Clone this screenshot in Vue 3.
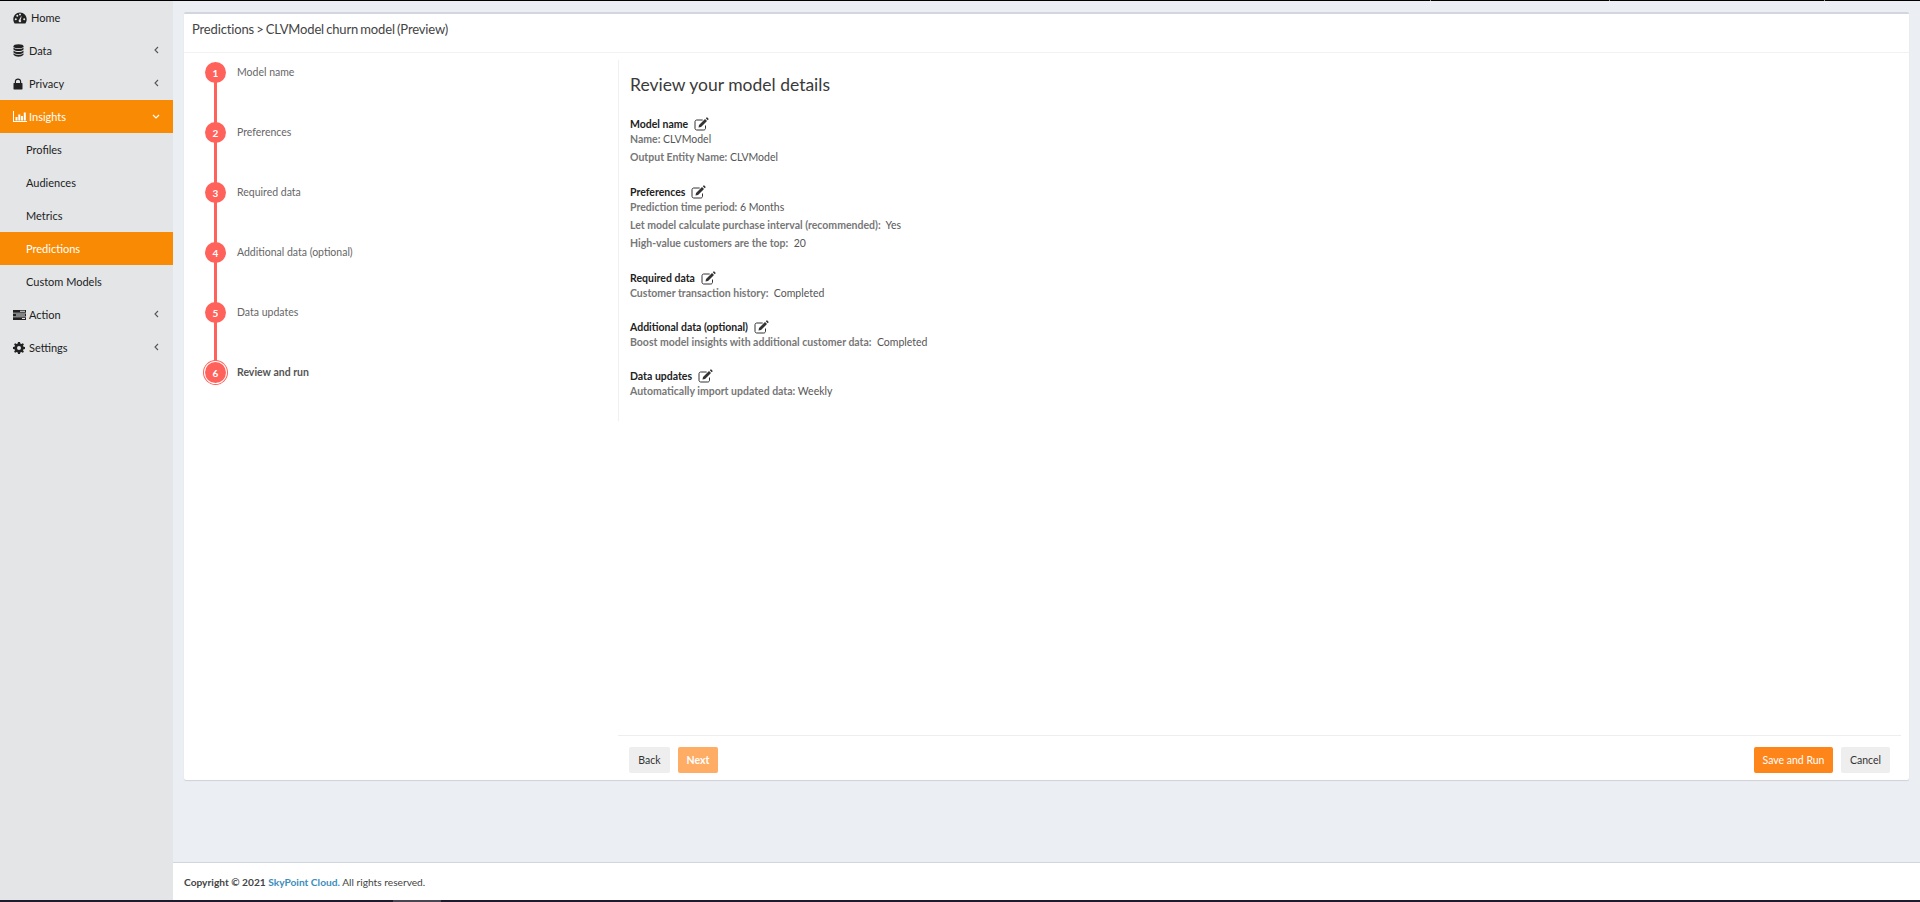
<script setup>
const nav = [
  { label: 'Home', icon: 'home' },
  { label: 'Data', icon: 'data', caret: true },
  { label: 'Privacy', icon: 'lock', caret: true },
  { label: 'Insights', icon: 'chart', caret: true, open: true },
  { label: 'Profiles', sub: true },
  { label: 'Audiences', sub: true },
  { label: 'Metrics', sub: true },
  { label: 'Predictions', sub: true, active: true },
  { label: 'Custom Models', sub: true },
  { label: 'Action', icon: 'action', caret: true },
  { label: 'Settings', icon: 'cog', caret: true }
]
const steps = ['Model name', 'Preferences', 'Required data', 'Additional data (optional)', 'Data updates', 'Review and run']
const sections = [
  { title: 'Model name', rows: [['Name:', 'CLVModel'], ['Output Entity Name:', 'CLVModel']] },
  { title: 'Preferences', rows: [['Prediction time period:', '6 Months'], ['Let model calculate purchase interval (recommended):', '\u00a0Yes'], ['High-value customers are the top:', '\u00a020']] },
  { title: 'Required data', rows: [['Customer transaction history:', '\u00a0Completed']] },
  { title: 'Additional data (optional)', rows: [['Boost model insights with additional customer data:', '\u00a0Completed']] },
  { title: 'Data updates', rows: [['Automatically import updated data:', 'Weekly']] }
]
</script>

<template>
  <div class="page">
    <div class="topline"><i class="t1"></i><i class="t2"></i><i class="t3"></i></div>
    <div class="shell">
      <aside class="side">
        <div v-for="n in nav" :key="n.label" class="nav" :class="{ sub: n.sub, on: n.open || n.active, home: n.icon === 'home' }">
          <span v-if="n.icon" class="ico">
            <svg v-if="n.icon === 'home'" viewBox="0 0 14 12" width="14" height="12"><path fill="#222" fill-rule="evenodd" d="M7 0.5C3.2.5.3 3.500.3 7.300c0 1.600.5 3 1.300 4.200h10.800c.8-1.200 1.300-2.600 1.300-4.200C13.700 3.500 10.800.5 7 .5zM2.800 8.200a1 1 0 1 1 0-2 1 1 0 0 1 0 2zM4.300 4.800a1 1 0 1 1 0-2 1 1 0 0 1 0 2zM7 3.500a1 1 0 1 1 0-2 1 1 0 0 1 0 2zM8.200 8.700a1.300 1.300 0 1 1-2-.9l1.900-3.500.5.200-1 3.700c.4.100.6.300.6.500zM11.200 8.200a1 1 0 1 1 0-2 1 1 0 0 1 0 2z"/></svg>
            <svg v-else-if="n.icon === 'data'" viewBox="0 0 11 13" width="11" height="13"><ellipse cx="5.500" cy="2.200" rx="5" ry="2" fill="#222"/><path fill="#222" d="M.5 3.600c1 1 3 1.500 5 1.500s4-.5 5-1.500v2c-1 1-3 1.500-5 1.500s-4-.5-5-1.500zM.5 6.600c1 1 3 1.500 5 1.500s4-.5 5-1.500v2c-1 1-3 1.500-5 1.500s-4-.5-5-1.500zM.5 9.300c1 1 3 1.500 5 1.500s4-.5 5-1.500v1.500c-1 1.300-3 1.900-5 1.900s-4-.6-5-1.900z"/></svg>
            <svg v-else-if="n.icon === 'lock'" viewBox="0 0 10 12" width="10" height="12"><path fill="#222" d="M1 5h.8V3.600C1.800 1.700 3.200.5 5 .5s3.200 1.200 3.200 3.100V5H9c.3 0 .5.200.5.500v5.500c0 .3-.2.500-.5.500H1c-.3 0-.5-.2-.5-.5V5.500C.5 5.200.7 5 1 5zm2-.1h4V3.600C7 2.500 6.100 1.800 5 1.800s-2 .7-2 1.800z"/></svg>
            <svg v-else-if="n.icon === 'chart'" viewBox="0 0 14 11" width="14" height="11"><path fill="#fff" d="M0 0h1v10h13v1H0zM2.500 6h2v3.500h-2zM5.300 3.500h2v6h-2zM8 5h2v4.500H8zM10.800 1.500h2v8h-2z"/></svg>
            <svg v-else-if="n.icon === 'action'" viewBox="0 0 13 10" width="13" height="10"><path fill="#222" d="M0 0h13v2.800H0zM0 3.600h13v2.800H0zM0 7.200h13V10H0z"/><path fill="#e4e5e7" d="M7 .8h5v1H7zM3 4.400h9v1H3zM9 8h3v1H9z"/></svg>
            <svg v-else viewBox="0 0 12 12" width="12" height="12"><path fill="#222" fill-rule="evenodd" d="M5 0h2l.3 1.600 1.100.5L9.800 1.200l1.100 1.100-.9 1.400.5 1.100 1.500.3v1.800l-1.500.3-.5 1.100.9 1.400-1.100 1.100-1.400-.9-1.100.5L7 12H5l-.3-1.600-1.100-.5-1.400.9-1.100-1.100.9-1.400-.5-1.100L0 6.900V5.100l1.500-.3.500-1.100-.9-1.400 1.100-1.100 1.400.9 1.100-.5zM6 4a2 2 0 1 0 0 4 2 2 0 0 0 0-4z"/></svg>
          </span>
          <span class="lbl">{{ n.label }}</span>
          <svg v-if="n.caret && !n.open" class="caret" viewBox="0 0 5 8" width="5" height="8"><path d="M4 1 1 4l3 3" fill="none" stroke="#555" stroke-width="1.100"/></svg>
          <svg v-if="n.open" class="caret down" viewBox="0 0 8 5" width="8" height="5"><path d="M1 1l3 3 3-3" fill="none" stroke="#fff" stroke-width="1.100"/></svg>
        </div>
      </aside>
      <main class="main">
        <section class="content">
          <div class="card">
            <header class="head">Predictions &gt; CLVModel churn model (Preview)</header>
            <div class="body">
              <ol class="steps">
                <li v-for="(s, i) in steps" :key="s" class="step" :class="{ last: i === 5 }">
                  <span class="dot">{{ i + 1 }}</span>
                  <span class="steplbl">{{ s }}</span>
                </li>
              </ol>
              <div class="right">
                <div class="review">
                  <h2>Review your model details</h2>
                  <div v-for="sec in sections" :key="sec.title" class="sec">
                    <div class="sectitle">{{ sec.title }}
                      <svg class="edit" viewBox="0 0 15 14" width="15" height="14"><path d="M11.500 8.500v2.800c0 1-.7 1.700-1.700 1.700H2.700C1.700 13 1 12.300 1 11.300V4.700C1 3.700 1.700 3 2.700 3h6" fill="none" stroke="#333" stroke-width="1"/><path fill="#333" d="M5 8l6-6 2 2-6 6-2.500.5zM11.800 1.200l.8-.7c.2-.2.500-.2.700 0l1.200 1.200c.2.200.2.500 0 .7l-.8.800z"/></svg>
                    </div>
                    <div v-for="r in sec.rows" :key="r[0]" class="row"><b>{{ r[0] }}</b> {{ r[1] }}</div>
                  </div>
                </div>
                <div class="actions">
                  <button class="btn grey back">Back</button>
                  <button class="btn next">Next</button>
                  <span class="grow"></span>
                  <button class="btn save">Save and Run</button>
                  <button class="btn grey cancel">Cancel</button>
                </div>
              </div>
            </div>
          </div>
        </section>
        <footer class="foot"><b>Copyright © 2021 <a>SkyPoint Cloud.</a></b> All rights reserved.</footer>
      </main>
    </div>
    <div class="botline"><i></i></div>
  </div>
</template>

<style>
html, body { margin: 0; background: #ebeef3; }
</style>

<style scoped>
.page { height: 902px; display: flex; flex-direction: column; overflow: hidden; font-family: "Lato", "Liberation Sans", sans-serif; font-size: 11px; color: #333; }
.topline { height: 1px; background: #000; display: flex; flex: none; }
.topline i { width: 1px; background: #999; }
.t1 { margin-left: 1430px; }
.t2 { margin-left: 178px; }
.t3 { margin-left: 214px; }
.shell { flex: 1; display: flex; min-height: 0; }
.side { width: 173px; flex: none; background: #e4e5e7; }
.nav { height: 33px; display: flex; align-items: center; padding-left: 13px; position: relative; color: #222; box-sizing: border-box; }
.nav.sub { padding-left: 26px; }
.nav.on { background: #f98b04; color: #fff; }
.ico { width: 16px; display: flex; align-items: center; }
.home .ico { margin-right: 2px; }
.caret { position: absolute; right: 14px; top: 12px; }
.caret.down { right: 13px; top: 14px; }
.main { flex: 1; display: flex; flex-direction: column; min-width: 0; }
.content { flex: 1; padding: 11px 11px 0 11px; min-height: 0; }
.card { height: 768px; background: #fff; border-top: 2px solid #d2d6de; border-radius: 2px; box-shadow: 0 1px 1px rgba(0,0,0,.12); display: flex; flex-direction: column; box-sizing: border-box; }
.head { flex: none; border-bottom: 1px solid #f2f2f2; padding: 6px 8px 0; box-sizing: border-box; height: 39px; font-size: 13px; letter-spacing: -0.15px; word-spacing: -1px; line-height: 18px; color: #444; }
.body { flex: 1; display: flex; min-height: 0; }
.steps { width: 434px; flex: none; list-style: none; margin: 0; padding: 9px 0 0 21px; box-sizing: border-box; }
.step { height: 60px; display: flex; position: relative; }
.step::before { content: ""; position: absolute; left: 9px; top: 20px; width: 3px; height: 41px; background: #ff625a; }
.step.last::before { display: none; }
.dot { width: 21px; height: 21px; border-radius: 50%; background: #ff625a; color: #fff; font-size: 10px; font-weight: 700; display: flex; align-items: center; justify-content: center; position: relative; flex: none; }
.last .dot { box-shadow: 0 0 0 1px #fff, 0 0 0 2px #ff625a; }
.steplbl { margin-left: 11px; font-size: 10.500px; line-height: 21px; color: #666; }
.last .steplbl { font-weight: 700; color: #555; }
.right { flex: 1; display: flex; flex-direction: column; min-width: 0; padding: 7px 8px 0 0; }
.review { height: 361px; flex: none; border-left: 1px solid #f0f0f0; padding-left: 11px; box-sizing: border-box; }
h2 { font-size: 17.500px; font-weight: 400; margin: 12px 0 0; line-height: 26px; color: #3a3a3a; }
.sec { margin-bottom: 18.800px; }
.sec:first-of-type { margin-top: 20px; }
.sectitle { font-weight: 700; font-size: 10.500px; line-height: 12px; color: #222; display: flex; align-items: center; gap: 6px; height: 12px; }
.row { font-size: 10.500px; line-height: 18.400px; color: #555; }
.row b { color: #777; font-weight: 700; }
.actions { margin-top: auto; border-top: 1px solid #eee; height: 45px; box-sizing: border-box; padding: 11px 11px 0 11px; display: flex; gap: 8px; }
.grow { flex: 1; }
.btn { height: 26px; border: 0; border-radius: 2px; font: inherit; font-size: 10.500px; padding: 0; }
.grey { background: #eee; color: #333; }
.back { width: 41px; }
.cancel { width: 49px; }
.next { width: 40px; background: #ffac65; color: #fff; font-weight: 700; }
.save { width: 79px; background: #fe851a; color: #fff; }
.foot { height: 38px; flex: none; box-sizing: border-box; background: #fff; border-top: 1px solid #d2d6de; padding: 10px 0 0 11px; font-size: 10.200px; line-height: 18px; color: #444; }
.foot a { color: #3c8dbc; }
.botline { height: 2px; background: #1f1a2e; flex: none; padding-left: 393px; }
.botline i { display: block; width: 48px; height: 2px; background: #4a4654; }
</style>
